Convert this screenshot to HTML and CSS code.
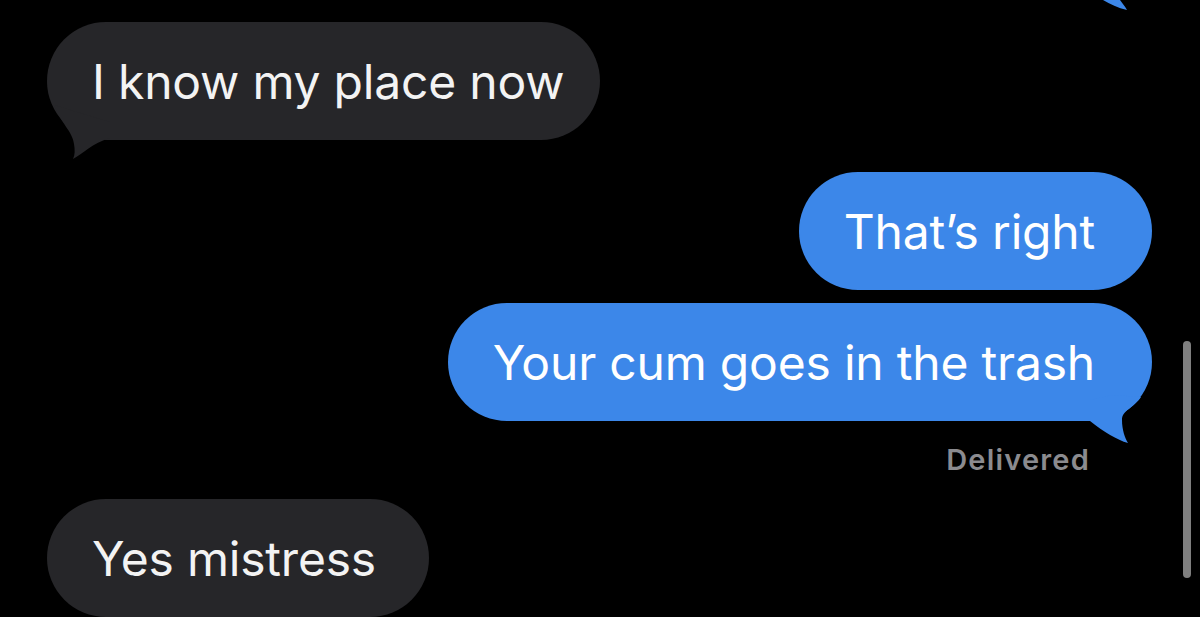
FILE: index.html
```html
<!DOCTYPE html>
<html>
<head>
<meta charset="utf-8">
<link rel="stylesheet" href="styles.css">
</head>
<body>
<div class="thread">
  <div class="row row-out stub-row">
    <svg class="stub" width="30" height="12" viewBox="0 0 30 12"><path d="M3 0 L20 0 C22 3 25 6 27 10 C18 8 10 4 3 0 Z" fill="#3c87e9"/></svg>
  </div>
  <div class="row row-in first">
    <div class="bubble in b-place">
      <span>I know my place now</span>
      <svg class="tail tail-in" width="70" height="58" viewBox="0 0 70 58"><path d="M4 3 C10 20 23 30 24 42 C25 48 25 53 23 57 C33 52 42 41 60 36 L60 20 Z" fill="#262629"/></svg>
    </div>
  </div>
  <div class="row row-out gap-lg">
    <div class="bubble out"><span>That’s right</span></div>
  </div>
  <div class="row row-out gap-sm">
    <div class="bubble out">
      <span>Your cum goes in the trash</span>
      <svg class="tail tail-out" width="70" height="56" viewBox="0 0 70 56"><path d="M59 7 C52 18 40 20 40 30 C40 40 43 48 46 53 C35 50 22 42 8 31 L8 10 L30 5 Z" fill="#3c87e9"/></svg>
    </div>
  </div>
  <div class="row row-out status-row">
    <span class="status">Delivered</span>
  </div>
  <div class="row row-in last">
    <div class="bubble in b-yes"><span>Yes mistress</span></div>
  </div>
</div>
<div class="scrollbar"></div>
</body>
</html>
```
FILE: styles.css
```css
html, body {
  margin: 0;
  padding: 0;
  background: #000;
  height: 100%;
  overflow: hidden;
}
body {
  font-family: Inter, "Liberation Sans", sans-serif;
  position: relative;
}
.thread {
  display: flex;
  flex-direction: column;
  padding: 0 48px 0 47px;
}
.row {
  display: flex;
}
.row-in { justify-content: flex-start; }
.row-out { justify-content: flex-end; }
.stub-row { height: 12px; }
.stub { margin-right: 22px; display: block; }
.first { margin-top: 10px; }
.gap-lg { margin-top: 32px; }
.gap-sm { margin-top: 13px; }
.status-row { margin-top: 24px; padding-right: 62px; }
.last { margin-top: 24px; }
.bubble {
  position: relative;
  height: 118px;
  box-sizing: border-box;
  border-radius: 59px;
  display: flex;
  align-items: center;
  padding: 0 57px 0 45px;
  font-size: 48px;
  color: #f3f3f3;
  letter-spacing: -0.2px;
  white-space: nowrap;
}
.bubble span { position: relative; z-index: 1; }
.bubble.in { background: #262629; }
.bubble.out { background: #3c87e9; color: #fff; }
.b-place { padding-right: 36px; }
.b-yes { padding-right: 53px; }
.tail { position: absolute; display: block; }
.tail-in { left: 3px; bottom: -20px; }
.tail-out { right: 0; bottom: -25px; }
.status {
  font-size: 29px;
  line-height: 30px;
  font-weight: 600;
  letter-spacing: 1.2px;
  color: #8b8b8f;
}
.scrollbar {
  position: absolute;
  left: 1183px;
  top: 341px;
  width: 8px;
  height: 237px;
  border-radius: 4px;
  background: #7f7f7f;
}
```
